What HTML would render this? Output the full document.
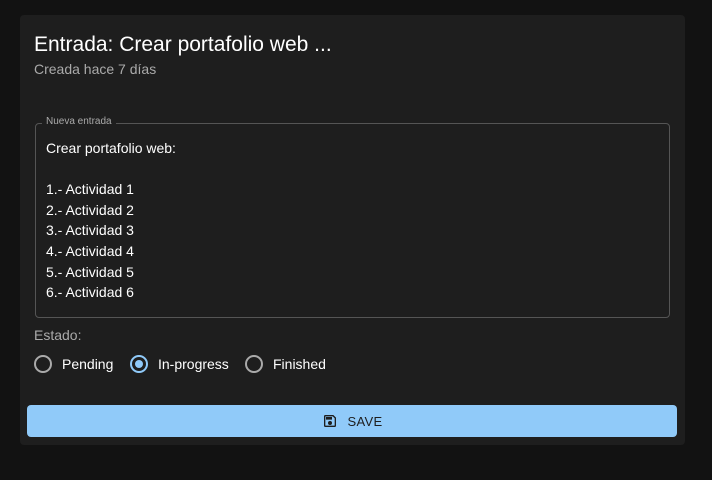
<!DOCTYPE html>
<html><head><style>
*{margin:0;padding:0;box-sizing:border-box}
body{width:712px;height:480px;background:#121212;font-family:"Liberation Sans",Arial,sans-serif;position:relative;overflow:hidden}
.card{position:absolute;left:20px;top:15px;width:665px;height:430px;background:#1e1e1e;border-radius:4px}
.abs{position:absolute;white-space:nowrap}
.t{left:14px;top:18px;font-size:21px;color:#fff}
.s{left:14px;top:46px;font-size:14px;color:#aaa}
.fs{left:15px;top:108px;width:635px;height:195px;border:1px solid #555;border-radius:4px}
.lg{left:22px;top:101px;font-size:10px;color:#aaa;background:#1e1e1e;padding:0 4px}
.txt{left:26px;top:123px;font-size:14px;color:#fff;line-height:20.6px;white-space:pre}
.e{left:14px;top:312px;font-size:14px;color:#aaa}
.r{top:340px;height:18px;display:flex;align-items:center;font-size:14px;color:#fff}
.c{width:18px;height:18px;border:2px solid #aaa;border-radius:50%;margin-right:10px;position:relative}
.c.on{border-color:#90caf9}
.c.on::after{content:"";position:absolute;left:3px;top:3px;width:8px;height:8px;border-radius:50%;background:#90caf9}
.btn{left:7px;top:390px;width:650px;height:32px;background:#90caf9;border-radius:4px;display:flex;align-items:center;justify-content:center;font-size:13px;color:#1e1e1e;letter-spacing:0.3px}
</style></head><body>
<div class="card">
<div class="abs t">Entrada: Crear portafolio web ...</div>
<div class="abs s">Creada hace 7 días</div>
<div class="abs fs"></div>
<div class="abs lg">Nueva entrada</div>
<div class="abs txt">Crear portafolio web:

1.- Actividad 1
2.- Actividad 2
3.- Actividad 3
4.- Actividad 4
5.- Actividad 5
6.- Actividad 6</div>
<div class="abs e">Estado:</div>
<div class="abs r" style="left:14px"><span class="c"></span>Pending</div>
<div class="abs r" style="left:110px"><span class="c on"></span>In-progress</div>
<div class="abs r" style="left:225px"><span class="c"></span>Finished</div>
<div class="abs btn"><svg width="16" height="16" viewBox="0 0 24 24" style="margin-right:10px"><path fill="#1e1e1e" d="M17 3H5a2 2 0 0 0-2 2v14a2 2 0 0 0 2 2h14a2 2 0 0 0 2-2V7l-4-4zm2 16H5V5h11.17L19 7.83V19zm-7-7a3 3 0 1 0 0 6 3 3 0 0 0 0-6zM6 6h9v4H6z"/></svg>SAVE</div>
</div>
</body></html>
